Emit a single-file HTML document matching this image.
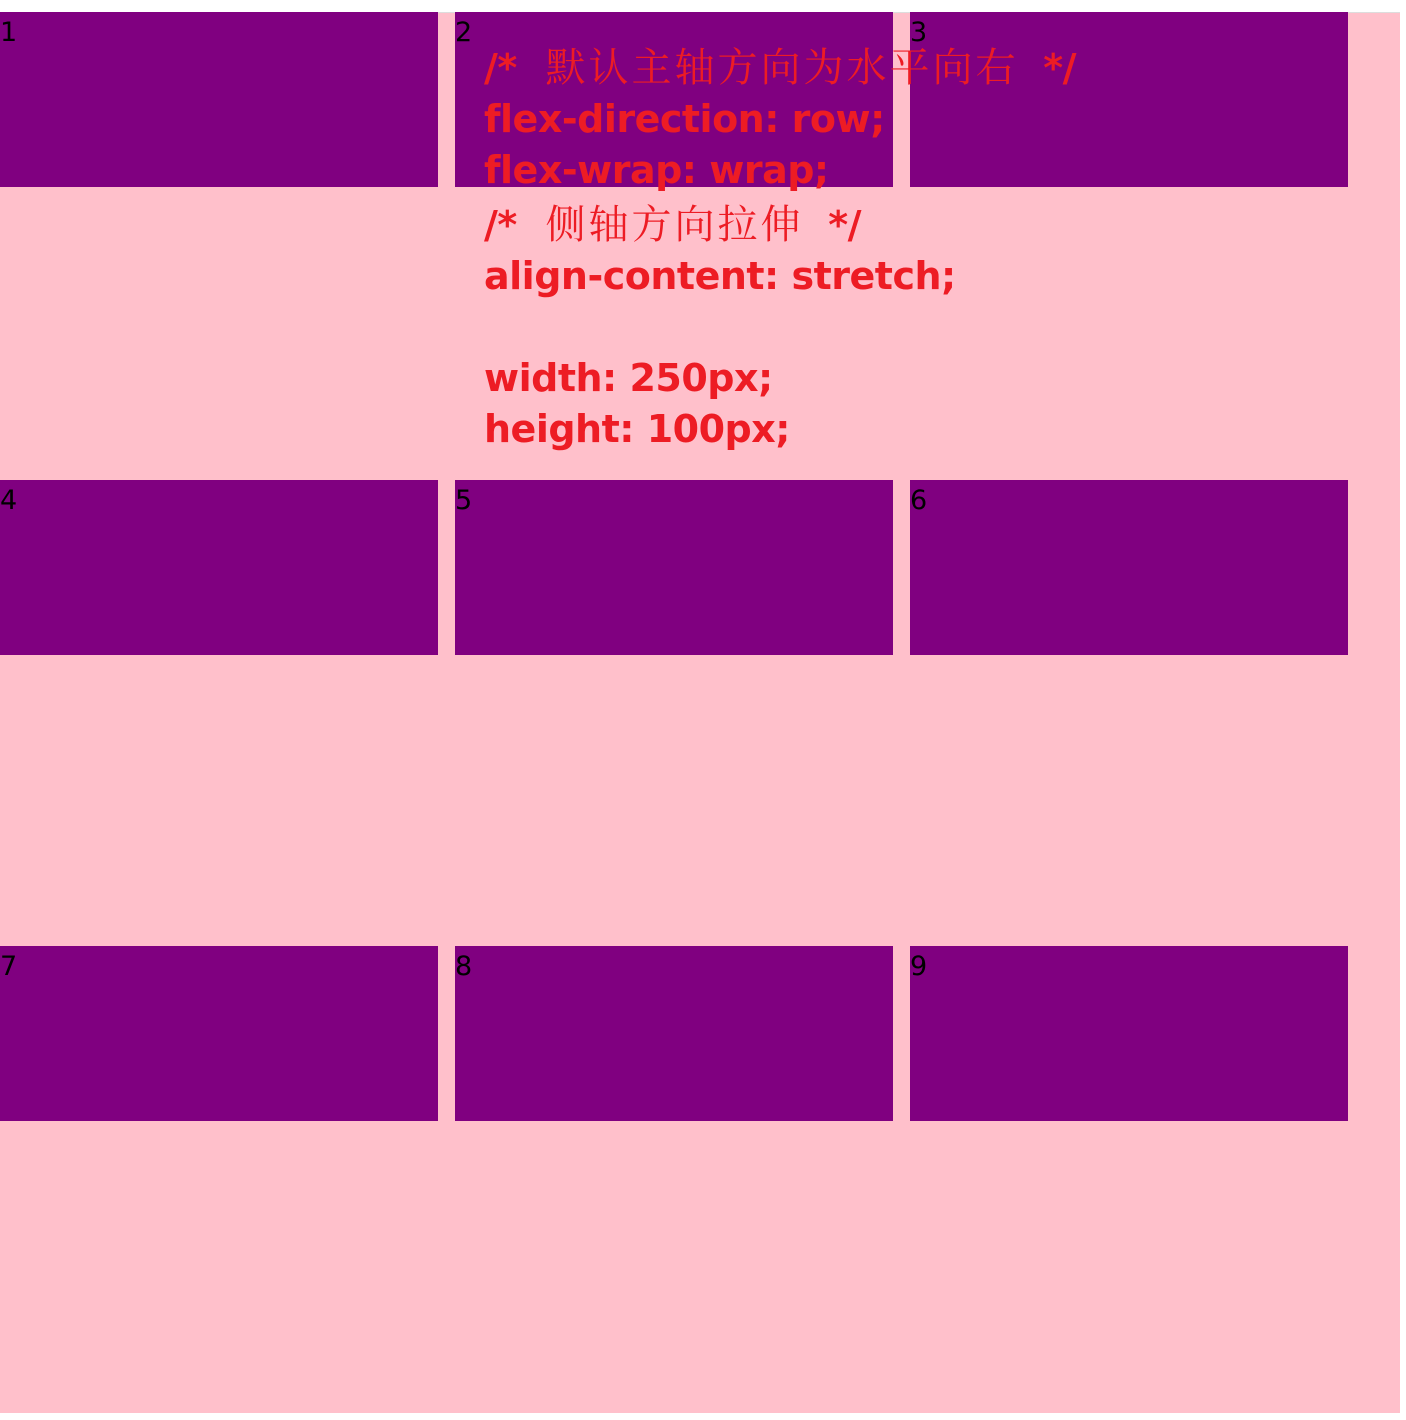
<!DOCTYPE html>
<html><head><meta charset="utf-8"><style>
html,body{margin:0;padding:0;background:#fff;width:1406px;height:1420px;overflow:hidden}
.wrap{position:absolute;left:0;top:12px;width:1400px;height:1401px;background:pink;border-top:1px solid #ddd;box-sizing:border-box}
.b{position:absolute;width:438px;height:175px;background:purple;font-family:"DejaVu Sans","Liberation Sans",sans-serif;font-size:27px;line-height:42px;color:#000}
.t{position:absolute;left:484px;top:39px;color:#ed1c24;font-family:"DejaVu Sans","Noto Sans CJK SC",sans-serif;font-weight:bold;font-size:38px;line-height:51px;white-space:pre;letter-spacing:-0.5px}
.c{font-family:"Noto Serif CJK SC",serif;font-weight:normal;font-size:40px;letter-spacing:3px;margin-left:16px;margin-right:12px}
</style></head><body>
<div class="wrap"></div>
<div class="b" style="left:0;top:12px">1</div>
<div class="b" style="left:455px;top:12px">2</div>
<div class="b" style="left:910px;top:12px">3</div>
<div class="b" style="left:0;top:480px">4</div>
<div class="b" style="left:455px;top:480px">5</div>
<div class="b" style="left:910px;top:480px">6</div>
<div class="b" style="left:0;top:946px">7</div>
<div class="b" style="left:455px;top:946px">8</div>
<div class="b" style="left:910px;top:946px">9</div>
<div class="t">/* <span class="c">默认主轴方向为水平向右</span> */
flex-direction: row;
flex-wrap: wrap;
/* <span class="c">侧轴方向拉伸</span> */
align-content: stretch;

width: 250px;
height: 100px;</div>
</body></html>
